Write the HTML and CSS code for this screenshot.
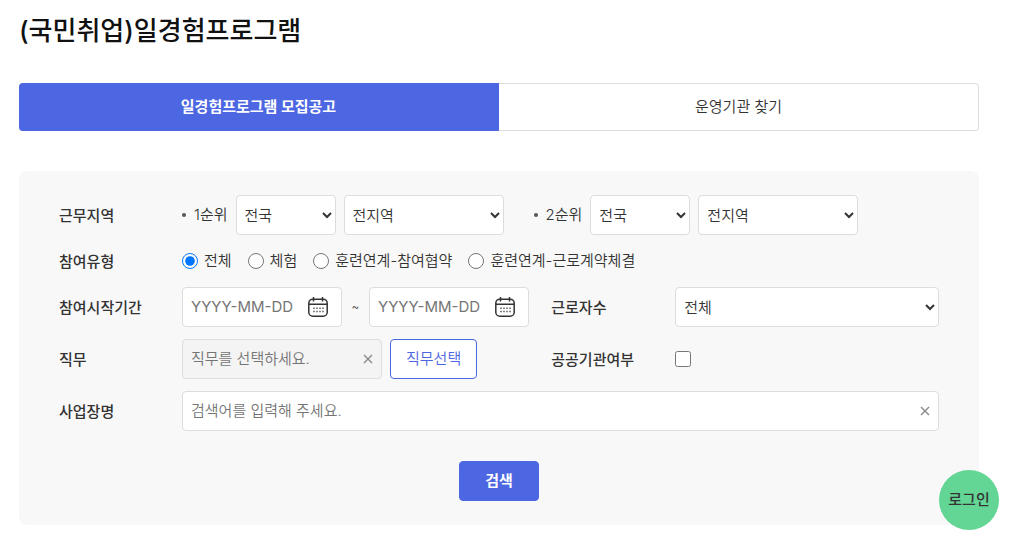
FILE: index.html
```html
<!DOCTYPE html>
<html lang="ko">
<head>
<meta charset="utf-8">
<meta name="viewport" content="width=device-width, initial-scale=1">
<title>(국민취업)일경험프로그램</title>
<link rel="stylesheet" href="styles.css">
</head>
<body>
<svg class="sprite" aria-hidden="true">
  <symbol id="calendar" viewBox="0 0 22 22">
    <rect x="1.8" y="3.2" width="18.4" height="17" rx="4" fill="none" stroke="#333" stroke-width="1.5"/>
    <path d="M2 8.2h18M6.5 1v4.5M15.5 1v4.5" fill="none" stroke="#333" stroke-width="1.5"/>
    <path d="M6.2 12.2h1.6M9.2 12.2h1.6M12.2 12.2h1.6M15.2 12.2h1.6M6.2 15.5h1.6M9.2 15.5h1.6M12.2 15.5h1.6M15.2 15.5h1.6" stroke="#666" stroke-width="1.5"/>
  </symbol>
  <symbol id="clear" viewBox="0 0 10 10">
    <path d="M1 1l8 8M9 1l-8 8" fill="none" stroke="#888" stroke-width="1.4"/>
  </symbol>
</svg>
<main class="page">
  <h1 class="title">(국민취업)일경험프로그램</h1>
  <nav class="tabs">
    <a class="tab tab-active" href="#notice">일경험프로그램 모집공고</a>
    <a class="tab" href="#agency">운영기관 찾기</a>
  </nav>
  <form class="panel">
    <div class="grid">
      <span class="label">근무지역</span>
      <div class="field wide regions">
        <div class="rank">
          <span class="rank-name">1순위</span>
          <select class="control city" aria-label="1순위 시도"><option>전국</option></select>
          <select class="control district" aria-label="1순위 지역"><option>전지역</option></select>
        </div>
        <div class="rank">
          <span class="rank-name">2순위</span>
          <select class="control city" aria-label="2순위 시도"><option>전국</option></select>
          <select class="control district" aria-label="2순위 지역"><option>전지역</option></select>
        </div>
      </div>

      <span class="label">참여유형</span>
      <div class="field wide radios">
        <label class="radio"><input class="tick" type="radio" name="type" checked>전체</label>
        <label class="radio"><input class="tick" type="radio" name="type">체험</label>
        <label class="radio"><input class="tick" type="radio" name="type">훈련연계-참여협약</label>
        <label class="radio"><input class="tick" type="radio" name="type">훈련연계-근로계약체결</label>
      </div>

      <label class="label" for="from">참여시작기간</label>
      <div class="field">
        <div class="control box date">
          <input class="text" id="from" type="text" placeholder="YYYY-MM-DD">
          <button class="icon-button" type="button" aria-label="시작일 선택"><svg class="calendar"><use href="#calendar"/></svg></button>
        </div>
        <span class="tilde">~</span>
        <div class="control box date">
          <input class="text" type="text" placeholder="YYYY-MM-DD" aria-label="종료일">
          <button class="icon-button" type="button" aria-label="종료일 선택"><svg class="calendar"><use href="#calendar"/></svg></button>
        </div>
      </div>
      <label class="label" for="workers">근로자수</label>
      <div class="field"><select class="control full" id="workers"><option>전체</option></select></div>

      <label class="label" for="job">직무</label>
      <div class="field job-field">
        <div class="control box job">
          <input class="text" id="job" type="text" placeholder="직무를 선택하세요." readonly>
          <button class="icon-button" type="button" aria-label="직무 지우기"><svg class="clear"><use href="#clear"/></svg></button>
        </div>
        <button class="button outline" type="button">직무선택</button>
      </div>
      <label class="label" for="public">공공기관여부</label>
      <div class="field"><input class="tick" id="public" type="checkbox"></div>

      <label class="label" for="company">사업장명</label>
      <div class="field wide">
        <div class="control box full">
          <input class="text" id="company" type="text" placeholder="검색어를 입력해 주세요.">
          <button class="icon-button" type="button" aria-label="사업장명 지우기"><svg class="clear"><use href="#clear"/></svg></button>
        </div>
      </div>
    </div>
    <div class="actions"><button class="button primary" type="submit">검색</button></div>
  </form>
</main>
<a class="login" href="#login">로그인</a>
</body>
</html>
```

FILE: styles.css
```css
* {
  box-sizing: border-box;
}

body {
  margin: 0;
  background: #fff;
  color: #333;
  font: 350 15px/24px Inter, "Noto Sans CJK KR", sans-serif;
}

.sprite {
  position: absolute;
  width: 0;
  height: 0;
}

.page {
  padding: 11px 34px 18px 19px;
}

.title {
  margin: 0 0 32px;
  color: #111;
  font-size: 26px;
  font-weight: 500;
  line-height: 40px;
}

.tabs {
  display: grid;
  grid-template-columns: 1fr 1fr;
  margin-bottom: 40px;
}

.tab {
  padding: 11px;
  border: 1px solid #ddd;
  border-left: 0;
  border-radius: 0 4px 4px 0;
  color: #333;
  text-align: center;
  text-decoration: none;
}

.tab-active {
  border-color: #4d66e1;
  border-radius: 4px 0 0 4px;
  background: #4d66e1;
  color: #fff;
  font-weight: 700;
}

.panel {
  padding: 24px 40px;
  border-radius: 8px;
  background: #f8f8f8;
}

.grid {
  display: grid;
  grid-template-columns: 123px 7fr 124px 5fr;
  row-gap: 12px;
  align-items: center;
}

.label {
  padding-top: 2px;
  font-weight: 500;
}

.field {
  display: flex;
  align-items: center;
  min-width: 0;
}

.wide {
  grid-column: 2 / -1;
}

.regions {
  gap: 30px;
}

.rank {
  display: flex;
  align-items: center;
  gap: 8px;
}

.rank-name {
  display: flex;
  align-items: center;
  gap: 8px;
}

.rank-name::before {
  width: 4px;
  height: 4px;
  border-radius: 50%;
  background: #555;
  content: "";
}

.control {
  height: 40px;
  border: 1px solid #ddd;
  border-radius: 4px;
  background: #fff;
  color: #333;
  font: inherit;
}

select.control {
  padding: 0 0 0 4px;
}

.city {
  width: 100px;
}

.district {
  width: 160px;
}

.full {
  width: 100%;
}

.radios {
  gap: 16px;
}

.radio {
  display: flex;
  align-items: center;
  gap: 6px;
  line-height: 28px;
}

.tick {
  width: 16px;
  height: 16px;
  margin: 0;
}

.box {
  display: flex;
  align-items: center;
  padding: 0 8px;
}

.date {
  width: 160px;
  padding-right: 12px;
  font-weight: 400;
}

.tilde {
  width: 27px;
  font-size: 12px;
  text-align: center;
}

.job {
  width: 200px;
  background: #f4f4f4;
}

.job-field {
  gap: 8px;
}

.text {
  flex: 1;
  min-width: 0;
  padding: 0;
  border: 0;
  outline: 0;
  background: transparent;
  color: #333;
  font: inherit;
}

.text::placeholder {
  color: #757575;
}

.icon-button {
  display: flex;
  padding: 0;
  border: 0;
  background: none;
}

.calendar {
  width: 22px;
  height: 22px;
}

.clear {
  width: 10px;
  height: 10px;
}

.button {
  height: 40px;
  border: 1px solid #4d66e1;
  border-radius: 4px;
  font: inherit;
}

.outline {
  padding: 0 15px;
  background: #fff;
  color: #4d66e1;
}

.primary {
  min-width: 80px;
  background: #4d66e1;
  color: #fff;
  font-weight: 700;
}

.actions {
  display: flex;
  justify-content: center;
  margin-top: 30px;
}

.login {
  position: fixed;
  right: 14px;
  bottom: 13px;
  width: 60px;
  border-radius: 50%;
  background: #63d594;
  color: #333;
  font-weight: 500;
  line-height: 60px;
  text-align: center;
  text-decoration: none;
}
```
